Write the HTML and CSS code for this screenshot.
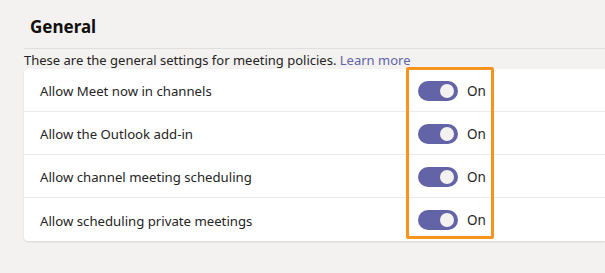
FILE: index.html
```html
<!DOCTYPE html>
<html>
<head>
<meta charset="utf-8">
<link rel="stylesheet" href="styles.css">
</head>
<body>
<div class="page">
  <h2 class="title">General</h2>
  <div class="section">
    <p class="desc">These are the general settings for meeting policies. <a class="link" href="#">Learn more</a></p>
    <div class="card">
      <div class="row"><span class="label">Allow Meet now in channels</span><span class="ctrl"><span class="toggle"><span class="knob"></span></span><span class="state">On</span></span></div>
      <div class="row"><span class="label">Allow the Outlook add-in</span><span class="ctrl"><span class="toggle"><span class="knob"></span></span><span class="state">On</span></span></div>
      <div class="row"><span class="label">Allow channel meeting scheduling</span><span class="ctrl"><span class="toggle"><span class="knob"></span></span><span class="state">On</span></span></div>
      <div class="row"><span class="label">Allow scheduling private meetings</span><span class="ctrl"><span class="toggle"><span class="knob"></span></span><span class="state">On</span></span></div>
    </div>
    <div class="highlight"></div>
  </div>
</div>
</body>
</html>
```
FILE: styles.css
```css
html, body {
  margin: 0;
  padding: 0;
  background: #f3f2f1;
  overflow: hidden;
  width: 605px;
  height: 273px;
}
.page {
  font-family: "Noto Sans", "Open Sans", sans-serif;
  color: #252423;
  padding-top: 15px;
}
.title {
  margin: 0 0 0 30px;
  font-size: 17px;
  font-weight: 700;
  line-height: 24px;
  height: 33px;
  color: #11100f;
}
.section {
  position: relative;
  margin-left: 24px;
  border-top: 1px solid #e1dfdd;
}
.desc {
  margin: 0;
  font-size: 13px;
  line-height: 20px;
  padding-top: 1px;
  height: 19px;
  color: #252423;
}
.link {
  color: #6264a7;
  text-decoration: none;
}
.card {
  background: #fff;
  border-radius: 4px 0 0 4px;
  box-shadow: 0 1px 2px rgba(0,0,0,0.12);
}
.row {
  display: grid;
  grid-template-columns: 378px auto;
  align-items: center;
  height: 43px;
  padding-left: 16px;
  padding-top: 2px;
  border-bottom: 1px solid #edebe9;
  box-sizing: border-box;
  font-size: 13.2px;
}
.row:last-child {
  border-bottom: none;
}
.ctrl {
  display: flex;
  align-items: center;
  gap: 9px;
  margin-top: -1px;
}
.toggle {
  width: 40px;
  height: 20px;
  border-radius: 10px;
  background: #6264a7;
  display: flex;
  align-items: center;
  justify-content: flex-end;
  padding-right: 4px;
  box-sizing: border-box;
}
.knob {
  width: 14px;
  height: 14px;
  border-radius: 50%;
  background: #f3f2f1;
}
.state {
  font-size: 13.5px;
}
.highlight {
  position: absolute;
  left: 382px;
  top: 18px;
  width: 88px;
  height: 172px;
  border: 3px solid #f7941d;
  box-sizing: border-box;
  border-radius: 2px;
}
```
